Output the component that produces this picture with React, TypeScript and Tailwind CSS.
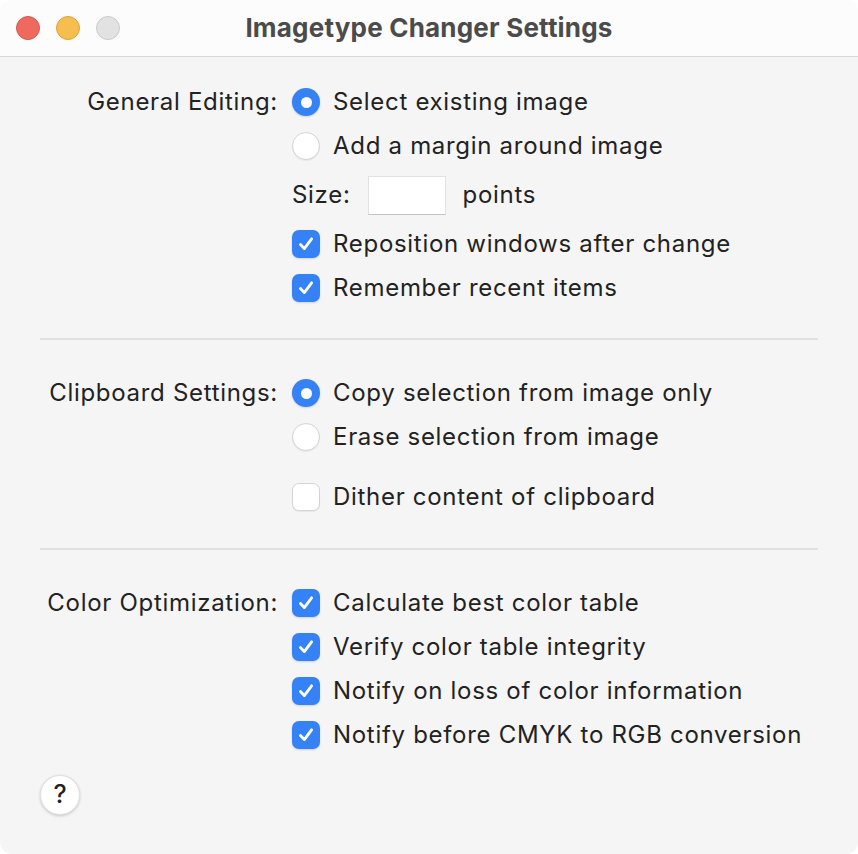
import React from 'react';

const Radio = ({ checked }: { checked?: boolean }) =>
  checked ? (
    <span className="flex h-[28px] w-[28px] shrink-0 items-center justify-center rounded-full bg-[#3582f7] shadow-[0_1px_2px_rgba(0,0,0,0.15)]">
      <span className="h-[11px] w-[11px] rounded-full bg-white" />
    </span>
  ) : (
    <span className="h-[28px] w-[28px] shrink-0 rounded-full border border-[#d4d4d4] bg-white shadow-[0_1px_1px_rgba(0,0,0,0.06)]" />
  );

const Check = ({ checked }: { checked?: boolean }) =>
  checked ? (
    <span className="flex h-[28px] w-[28px] shrink-0 items-center justify-center rounded-[7px] bg-[#3582f7] shadow-[0_1px_2px_rgba(0,0,0,0.15)]">
      <svg width="18" height="18" viewBox="0 0 18 18" fill="none">
        <path d="M3.5 9.5 L7.3 13.6 L14.6 3.8" stroke="white" strokeWidth="2.8" strokeLinecap="round" strokeLinejoin="round" />
      </svg>
    </span>
  ) : (
    <span className="h-[28px] w-[28px] shrink-0 rounded-[7px] border border-[#d4d4d4] bg-white shadow-[0_1px_1px_rgba(0,0,0,0.06)]" />
  );

const Row = ({ children, className = 'h-[44px]' }: { children: React.ReactNode; className?: string }) => (
  <div className={`flex items-center gap-[13px] ${className}`}>{children}</div>
);

const Section = ({ label, children }: { label: string; children: React.ReactNode }) => (
  <div className="grid grid-cols-[278px_1fr] gap-x-[14px]">
    <div className="flex h-[44px] items-center justify-end">{label}</div>
    <div className="flex flex-col">{children}</div>
  </div>
);

const Divider = () => <div className="mx-[40px] h-[2px] bg-[#e0e0e0]" />;

export default function App() {
  return (
    <div className="min-h-screen bg-white">
      <div
        className="flex h-[854px] w-[858px] flex-col overflow-hidden rounded-[12px] bg-[#f5f5f5] text-[24px] tracking-[0.7px] text-[#222222]"
        style={{ fontFamily: 'Inter, "Noto Sans", sans-serif' }}
      >
        <div className="relative flex h-[57px] shrink-0 items-center justify-center border-b border-[#d8d8d8] bg-[#fcfcfc]">
          <div className="absolute left-[16px] top-[16px] flex gap-[16px]">
            <span className="h-[24px] w-[24px] rounded-full border border-[#d5594e] bg-[#ee6a5f]" />
            <span className="h-[24px] w-[24px] rounded-full border border-[#d9a340] bg-[#f5be4f]" />
            <span className="h-[24px] w-[24px] rounded-full border border-[#cbcbcb] bg-[#e2e2e2]" />
          </div>
          <span className="pb-[2px] text-[26px] font-bold tracking-[0.2px] text-[#4b4b4b]">Imagetype Changer Settings</span>
        </div>

        <div className="flex flex-col pt-[23px]">
          <Section label="General Editing:">
            <Row>
              <Radio checked />
              <span>Select existing image</span>
            </Row>
            <Row>
              <Radio />
              <span>Add a margin around image</span>
            </Row>
            <div className="flex h-[54px] items-center">
              <span>Size:</span>
              <span className="ml-[17px] h-[39px] w-[78px] border border-[#e2e2e2] border-b-[#c4c4c4] bg-white" />
              <span className="ml-[17px]">points</span>
            </div>
            <Row>
              <Check checked />
              <span>Reposition windows after change</span>
            </Row>
            <Row>
              <Check checked />
              <span>Remember recent items</span>
            </Row>
          </Section>

          <div className="mt-[28px] mb-[31px]">
            <Divider />
          </div>

          <Section label="Clipboard Settings:">
            <Row>
              <Radio checked />
              <span>Copy selection from image only</span>
            </Row>
            <Row>
              <Radio />
              <span>Erase selection from image</span>
            </Row>
            <Row className="mt-[16px] h-[44px]">
              <Check />
              <span>Dither content of clipboard</span>
            </Row>
          </Section>

          <div className="mt-[29px] mb-[31px]">
            <Divider />
          </div>

          <Section label="Color Optimization:">
            <Row>
              <Check checked />
              <span>Calculate best color table</span>
            </Row>
            <Row>
              <Check checked />
              <span>Verify color table integrity</span>
            </Row>
            <Row>
              <Check checked />
              <span>Notify on loss of color information</span>
            </Row>
            <Row>
              <Check checked />
              <span>Notify before CMYK to RGB conversion</span>
            </Row>
          </Section>

          <div className="mt-[18px] pl-[40px]">
            <button className="flex h-[40px] w-[40px] items-center justify-center rounded-full border border-[#e0e0e0] bg-white text-[25px] font-medium tracking-normal text-[#222] shadow-[0_1px_3px_rgba(0,0,0,0.18)]">
              ?
            </button>
          </div>
        </div>
      </div>
    </div>
  );
}
